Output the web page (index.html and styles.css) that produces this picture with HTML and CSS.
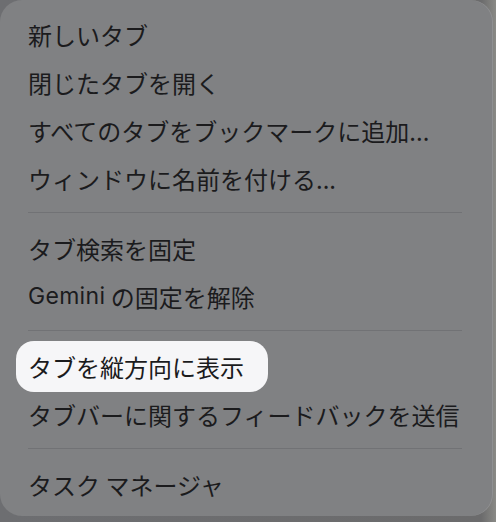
FILE: index.html
```html
<!DOCTYPE html>
<html lang="ja">
<head>
<meta charset="utf-8">
<link rel="stylesheet" href="styles.css">
</head>
<body>
<div class="stage">
  <ul class="menu">
    <li class="item">新しいタブ</li>
    <li class="item">閉じたタブを開く</li>
    <li class="item">すべてのタブをブックマークに追加...</li>
    <li class="item">ウィンドウに名前を付ける...</li>
    <li class="sep"></li>
    <li class="item">タブ検索を固定</li>
    <li class="item"><span class="latin">Gemini</span>&nbsp;の固定を解除</li>
    <li class="sep"></li>
    <li class="item item-hl"><span class="hl">タブを縦方向に表示</span></li>
    <li class="item">タブバーに関するフィードバックを送信</li>
    <li class="sep"></li>
    <li class="item">タスク マネージャ</li>
  </ul>
</div>
</body>
</html>
```

FILE: styles.css
```css
html, body {
  margin: 0;
  padding: 0;
}
body {
  width: 496px;
  height: 522px;
  overflow: hidden;
  background: #6c6d6f;
  font-family: "Noto Sans CJK JP", "Noto Sans", sans-serif;
}
.stage {
  width: 496px;
  height: 522px;
  background: linear-gradient(90deg, #6d6e71 0%, #6b6b6c 97%, #8a8a86 100%);
}
.menu {
  list-style: none;
  margin: 0;
  padding: 10px 0 8px 0;
  width: 493px;
  height: 516px;
  box-sizing: border-box;
  background: #808183;
  border-radius: 22px;
  box-shadow: inset -1px 0 0 rgba(255,255,255,0.12);
  color: #1b1b1d;
}
.item {
  height: 48px;
  display: flex;
  align-items: center;
  padding-left: 28px;
  font-size: 24px;
  white-space: nowrap;
}
.latin {
  font-family: "Inter", "Noto Sans", sans-serif;
  font-size: 23px;
  letter-spacing: 0.3px;
}
.item-hl {
  padding-left: 16px;
}
.hl {
  display: flex;
  align-items: center;
  height: 51px;
  padding: 0 24px 0 12px;
  background: #f6f6f8;
  border-radius: 18px;
}
.sep {
  height: 1px;
  margin: 10px 31px 11px 28px;
  background: #717275;
}
```
